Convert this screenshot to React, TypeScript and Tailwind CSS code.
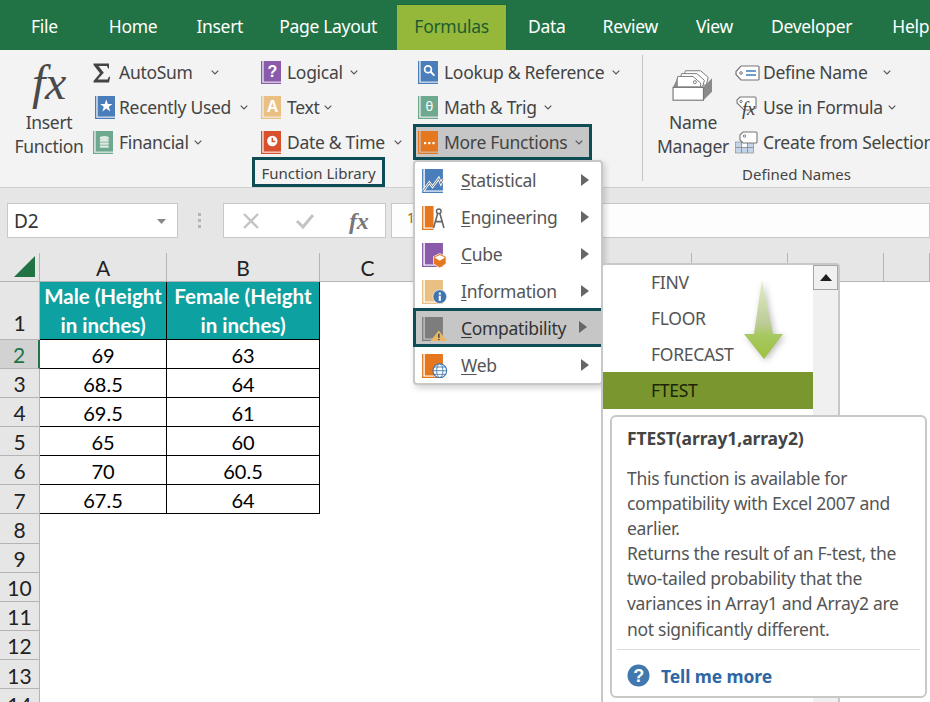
import React from "react";

const ui = { fontFamily: '"Noto Sans", "Open Sans", sans-serif' };
const cell = { fontFamily: 'Lato, "Open Sans", sans-serif' };

function Book({ color, w = 20, h = 23, children }: { color: string; w?: number; h?: number; children?: React.ReactNode }) {
  return (
    <svg width={w} height={h} viewBox="0 0 20 23" className="shrink-0 overflow-visible">
      <rect x="0" y="0" width="1.3" height="23" fill={color} />
      <rect x="2.6" y="0" width="17.4" height="20.6" fill={color} />
      <rect x="0" y="21.7" width="20" height="1.3" fill={color} />
      {children}
    </svg>
  );
}

function Chevron({ ml }: { ml: number }) {
  return (
    <svg width="8" height="5" viewBox="0 0 8 5" style={{ marginLeft: ml }} className="shrink-0">
      <path d="M0.7 0.7 L4 4 L7.3 0.7" fill="none" stroke="#555" strokeWidth="1.2" />
    </svg>
  );
}

function Row({ icon, label, ml, x = 26 }: { icon: React.ReactNode; label: string; ml: number; x?: number }) {
  return (
    <div className="h-[35px] flex items-center whitespace-nowrap">
      <div className="shrink-0 flex items-center" style={{ width: x }}>{icon}</div>
      <span>{label}</span>
      <Chevron ml={ml} />
    </div>
  );
}

const Sigma = (
  <svg width="18" height="20" viewBox="0 0 18 20">
    <path d="M0.5 0.5 H16 V5.5 H15 L14 3 H5.5 L10.8 9.8 L4.6 16.6 H14.5 L16 13.8 H17.2 L16 19.5 H0.5 V18 L7 10.3 L0.5 2 Z" fill="#444" />
  </svg>
);
const RecentIcon = (
  <div className="ml-[2px] flex">
    <Book color="#4a7ebb">
      <path d="M11.3 3.5 L12.9 8 L17.5 8 L13.8 10.8 L15.2 15.4 L11.3 12.6 L7.4 15.4 L8.8 10.8 L5.1 8 L9.7 8 Z" fill="#fff" />
    </Book>
  </div>
);
const FinIcon = (
  <Book color="#6ea98f">
    <ellipse cx="11.3" cy="7" rx="4.6" ry="2" fill="#dfe9e3" />
    <rect x="6.7" y="8.4" width="9.2" height="2.4" rx="1" fill="#dfe9e3" />
    <rect x="6.7" y="11.4" width="9.2" height="2.4" rx="1" fill="#dfe9e3" />
    <rect x="6.7" y="14.4" width="9.2" height="2.4" rx="1" fill="#dfe9e3" />
  </Book>
);
const LogicalIcon = (
  <Book color="#8a5aab">
    <text x="11.3" y="16" textAnchor="middle" fontSize="16" fontWeight="700" fill="#fff" fontFamily="Liberation Sans, sans-serif">?</text>
  </Book>
);
const TextIcon = (
  <Book color="#e9bf82">
    <text x="11.3" y="16" textAnchor="middle" fontSize="16" fontWeight="700" fill="#fff" fontFamily="Liberation Sans, sans-serif">A</text>
  </Book>
);
const DateIcon = (
  <Book color="#d9512c">
    <circle cx="11.3" cy="10" r="5.2" fill="#fff" />
    <path d="M11.3 6.8 V10.4 H14.4" fill="none" stroke="#d9512c" strokeWidth="1.5" />
  </Book>
);
const LookupIcon = (
  <Book color="#4a7ebb">
    <circle cx="10" cy="8.2" r="3.4" fill="none" stroke="#fff" strokeWidth="1.7" />
    <path d="M12.6 10.8 L16.4 14.6" stroke="#fff" strokeWidth="2" />
  </Book>
);
const MathIcon = (
  <Book color="#6ea98f">
    <text x="11.3" y="15" textAnchor="middle" fontSize="13" fill="#fff" fontFamily="Noto Sans, sans-serif">θ</text>
  </Book>
);
const MoreIcon = (
  <Book color="#e5771e">
    <rect x="6" y="11" width="2.2" height="2.2" fill="#fff" />
    <rect x="10.2" y="11" width="2.2" height="2.2" fill="#fff" />
    <rect x="14.4" y="11" width="2.2" height="2.2" fill="#fff" />
  </Book>
);

const NameMgr = (
  <svg width="42" height="38" viewBox="0 0 44 40">
    <path d="M14 5 H30 L38 12 L36 20 H10 Z" fill="#fff" stroke="#777" strokeWidth="1" />
    <path d="M10 8 H26 L34 15 L32 22 H6 Z" fill="#fff" stroke="#777" strokeWidth="1" />
    <path d="M6 11 H22 L30 18 V22 H3 Z" fill="#fff" stroke="#777" strokeWidth="1" />
    <circle cx="24" cy="17" r="1.6" fill="none" stroke="#777" />
    <path d="M1 22 L6 12 V22 Z" fill="#8a8a8a" />
    <path d="M33 22 L42 13 V27 L33 36 Z" fill="#8a8a8a" />
    <rect x="1" y="22.5" width="32" height="13.5" fill="#fff" stroke="#777" strokeWidth="1.2" />
  </svg>
);
const DefineIcon = (
  <svg width="25" height="18" viewBox="0 0 25 18">
    <path d="M6 2 H23 Q24 2 24 3 V15 Q24 16 23 16 H6 L1 10.5 V7.5 Z" fill="#fff" stroke="#777" strokeWidth="1.2" />
    <circle cx="6" cy="9" r="1.3" fill="none" stroke="#777" />
    <path d="M11 7 H21 M11 11 H21" stroke="#3f7cc0" strokeWidth="1.3" />
  </svg>
);
const UseIcon = (
  <svg width="25" height="24" viewBox="0 0 25 24" className="overflow-visible">
    <path d="M5 1 H20 Q21 1 21 2 V12 L17 14 H9 L2 7 V4 Z" fill="#fff" stroke="#777" strokeWidth="1.1" />
    <circle cx="6" cy="5.5" r="1.2" fill="none" stroke="#777" />
    <text x="7" y="19" fontSize="19" fontStyle="italic" fill="#444" fontFamily="Liberation Serif, serif">fx</text>
  </svg>
);
const CreateIcon = (
  <svg width="23" height="23" viewBox="0 0 23 23">
    <rect x="0.5" y="11" width="18" height="11" fill="#c4d5eb" stroke="#999" strokeWidth="0.8" />
    <path d="M6.5 11 V22 M12.5 11 V22 M0.5 16.5 H18.5" stroke="#8a8a8a" strokeWidth="0.9" />
    <rect x="6.5" y="11" width="6" height="5.5" fill="#fff" stroke="#8a8a8a" strokeWidth="0.8" />
    <path d="M8 1 H21 Q22 1 22 2 V11 Q22 12 21 12 H8 L5 9 V4 Z" fill="#fff" stroke="#777" strokeWidth="1.1" />
    <circle cx="9.5" cy="5" r="1.2" fill="none" stroke="#777" />
  </svg>
);

function Tab({ label, ml }: { label: string; ml: number }) {
  return <span style={{ marginLeft: ml }} className="shrink-0">{label}</span>;
}

function GroupLabel({ children }: { children: React.ReactNode }) {
  return <span className="text-[15px] tracking-normal text-[#444]">{children}</span>;
}

function Menu() {
  const items: [string, string, React.ReactNode][] = [
    ["S", "tatistical", (
      <Book color="#4a7ebb" w={21} h={24}>
        <path d="M1 21 L7 13 L10 17 L16 9 L18 14 L20 10" fill="none" stroke="#fff" strokeWidth="2.4" />
        <path d="M1 21 L7 13 L10 17 L16 9 L18 14 L20 10" fill="none" stroke="#666" strokeWidth="0.9" />
      </Book>
    )],
    ["E", "ngineering", (
      <Book color="#e5771e" w={21} h={24}>
        <rect x="11" y="0" width="9" height="23" fill="#fff" />
        <circle cx="16" cy="5" r="2.2" fill="none" stroke="#666" strokeWidth="1.4" />
        <path d="M15 7 L11 21 M17 7 L21 21 M12 15 H20" fill="none" stroke="#666" strokeWidth="1.5" />
      </Book>
    )],
    ["C", "ube", (
      <Book color="#8a5aab" w={21} h={24}>
        <path d="M17 10 L23 13 V20 L17 24 L11 20 V13 Z" fill="#e5771e" stroke="#fff" strokeWidth="0.7" />
        <path d="M12 14 L17 17 L22 14 L17 11.5 Z" fill="#fff" />
      </Book>
    )],
    ["I", "nformation", (
      <Book color="#e9bf82" w={21} h={24}>
        <circle cx="17" cy="16" r="6.6" fill="#3f74ae" stroke="#fff" strokeWidth="0.6" />
        <rect x="16" y="15" width="2" height="5" fill="#fff" />
        <rect x="16" y="12" width="2" height="2" fill="#fff" />
      </Book>
    )],
    ["C", "ompatibility", (
      <Book color="#7d7d7d" w={21} h={24}>
        <path d="M16 13 L24 23 H8 Z" fill="#eab765" />
        <rect x="15.4" y="16" width="1.4" height="4" fill="#444" />
        <rect x="15.4" y="21" width="1.4" height="1.2" fill="#444" />
      </Book>
    )],
    ["W", "eb", (
      <Book color="#e5771e" w={21} h={24}>
        <circle cx="17" cy="16" r="6.6" fill="#fff" stroke="#3f74ae" strokeWidth="1" />
        <ellipse cx="17" cy="16" rx="3" ry="6.6" fill="none" stroke="#3f74ae" strokeWidth="0.8" />
        <path d="M10.4 16 H23.6 M11.4 12.5 H22.6 M11.4 19.5 H22.6" stroke="#3f74ae" strokeWidth="0.8" />
      </Book>
    )],
  ];
  return (
    <div className="absolute left-[413px] top-[160px] w-[190px] h-[225px] bg-white border-2 border-[#c8c8c8] rounded-[4px] shadow-[2px_3px_6px_rgba(0,0,0,0.18)]">
      {items.map(([first, rest, icon], i) => {
        const active = i === 4;
        return (
          <div
            key={i}
            className={active
              ? "relative -mx-[2px] -mt-[2px] w-[191px] h-[39px] pt-[2px] flex items-center border-[3px] border-[#0e4d55] bg-[#c6c6c6] text-[#333]"
              : "relative h-[37px] flex items-center text-[#555]"}
          >
            <div className={active ? "ml-[6px] w-[39px] flex" : "ml-[7px] w-[39px] flex"}>{icon}</div>
            <span><span className="underline underline-offset-2">{first}</span>{rest}</span>
            <svg width="8" height="12" viewBox="0 0 8 12" className={active ? "absolute left-[163px] top-[10px]" : "absolute left-[166px] top-[12px]"}>
              <path d="M0 0 L8 6 L0 12 Z" fill="#666" />
            </svg>
          </div>
        );
      })}
    </div>
  );
}

function SubMenu() {
  return (
    <div className="absolute left-[601px] top-[263px] w-[239px] h-[439px] bg-white border-2 border-b-0 border-[#c8c8c8] rounded-t-[4px] flex">
      <div className="w-[210px] text-[#555] shrink-0">
        <div className="h-[35px] pl-[48px] flex items-center">FINV</div>
        <div className="h-[36px] pl-[48px] flex items-center">FLOOR</div>
        <div className="h-[36px] pl-[48px] flex items-center">FORECAST</div>
        <div className="h-[37px] pl-[48px] flex items-center bg-[#7a962e] text-[#1b2408]">FTEST</div>
      </div>
      <div className="flex-1 bg-[#f0f0f0]">
        <div className="h-[25px] w-[25px] border border-[#a6a6a6] bg-[#f0f0f0] flex items-center justify-center">
          <svg width="12" height="7" viewBox="0 0 12 7"><path d="M0 7 L6 0 L12 7 Z" fill="#1f1f1f" /></svg>
        </div>
      </div>
      <svg width="50" height="90" viewBox="0 0 50 90" className="absolute left-[136px] top-[14px] overflow-visible drop-shadow-[2px_2px_3px_rgba(0,0,0,0.25)]">
        <defs>
          <linearGradient id="arrowGrad" x1="0" y1="0" x2="0" y2="1">
            <stop offset="0" stopColor="#e4efc8" />
            <stop offset="0.55" stopColor="#bccb98" />
            <stop offset="0.7" stopColor="#a8c860" />
            <stop offset="1" stopColor="#9cc143" />
          </linearGradient>
        </defs>
        <path d="M23 1 L34 55 L44 55 L25 80 L5 55 L15 55 Z" fill="url(#arrowGrad)" />
      </svg>
    </div>
  );
}

function Tooltip() {
  return (
    <div className="absolute left-[610px] top-[415px] w-[317px] h-[283px] bg-white border-2 border-[#c8c8c8] rounded-[6px] px-[15px] pt-[9px] text-[#555]">
      <div className="font-bold tracking-[-0.1px] leading-[24px] text-[#444]">FTEST(array1,array2)</div>
      <div className="mt-[16px] leading-[25.1px] whitespace-nowrap">
        <div>This function is available for</div>
        <div>compatibility with Excel 2007 and</div>
        <div>earlier.</div>
        <div>Returns the result of an F-test, the</div>
        <div>two-tailed probability that the</div>
        <div>variances in Array1 and Array2 are</div>
        <div>not significantly different.</div>
      </div>
      <div className="-mx-[10px] mt-[7px] border-t border-[#dcdcdc] pt-[13px] pl-[10px] flex items-center">
        <svg width="23" height="23" viewBox="0 0 23 23" className="shrink-0">
          <circle cx="11.5" cy="11.5" r="11" fill="#4178ae" />
          <text x="11.5" y="18" textAnchor="middle" fontSize="18" fontWeight="700" fill="#fff" fontFamily="Liberation Sans, sans-serif">?</text>
        </svg>
        <span className="ml-[11px] font-bold tracking-[-0.1px] text-[#2f66a3]">Tell me more</span>
      </div>
    </div>
  );
}

const Hdr = "bg-[#e6e6e6] border-r border-b border-[#b4b4b4] flex items-center justify-center pt-[2px] text-[21px] tracking-normal text-[#222]";
const HdrEnd = "bg-[#e6e6e6] border-r border-b border-[#b4b4b4] flex items-end justify-center text-[21px] tracking-normal text-[#222]";
const Td = "border-r border-b border-black flex items-center justify-center pt-[2px] text-[20px] tracking-normal text-black";
const TealTd = "bg-[#0ea1a1] border-r border-b border-black text-white font-bold text-[20.5px] tracking-normal leading-[29px] text-center flex flex-col justify-center pt-[2px] whitespace-nowrap";

function Sheet() {
  const rows: [string, string][] = [["69", "63"], ["68.5", "64"], ["69.5", "61"], ["65", "60"], ["70", "60.5"], ["67.5", "64"]];
  return (
    <div style={cell} className="grid grid-cols-[40px_127px_153px_96px_180px_96px_96px_96px_46px] grid-rows-[29px_57.5px_repeat(13,29.17px)] overflow-hidden h-[449px]">
      <div className="bg-[#e6e6e6] border-r border-b border-[#b4b4b4] relative">
        <svg width="22" height="22" viewBox="0 0 22 22" className="absolute left-[14px] top-[3px]"><path d="M21 0 V21 H0 Z" fill="#217346" /></svg>
      </div>
      {["A", "B", "C", "", "", "", "", ""].map((c, i) => (
        <div key={i} className={Hdr}>{c}</div>
      ))}
      <div className={HdrEnd}>1</div>
      <div className={TealTd}><div>Male (Height</div><div>in inches)</div></div>
      <div className={TealTd}><div>Female (Height</div><div>in inches)</div></div>
      <div className="col-span-6" />
      {rows.map(([a, b], i) => (
        <React.Fragment key={i}>
          <div className={i === 0
            ? "bg-[#d2d2d2] border-r-2 border-b border-r-[#217346] border-b-[#b4b4b4] flex items-center justify-center pt-[2px] text-[21px] tracking-normal text-[#217346]"
            : Hdr}>{i + 2}</div>
          <div className={Td}>{a}</div>
          <div className={Td}>{b}</div>
          <div className="col-span-6" />
        </React.Fragment>
      ))}
      {[8, 9, 10, 11, 12, 13, 14].map((n) => (
        <React.Fragment key={n}>
          <div className={Hdr}>{n}</div>
          <div className="col-span-8" />
        </React.Fragment>
      ))}
    </div>
  );
}

export default function App() {
  return (
    <div style={ui} className="relative w-[930px] h-[702px] overflow-hidden bg-white text-[17.5px] tracking-[-0.3px] text-[#444]">
      <div className="h-[50px] bg-[#217346] flex items-end text-white whitespace-nowrap">
        <div className="flex items-center h-[50px] pt-[2px]">
          <Tab label="File" ml={31} />
          <Tab label="Home" ml={51} />
          <Tab label="Insert" ml={39} />
          <Tab label="Page Layout" ml={36} />
        </div>
        <div className="ml-[20px] h-[46px] w-[110px] bg-[#96b83a] border-r border-t border-[#1d6a3e] text-[#1d5c30] flex items-center justify-center pb-[2px] shrink-0">Formulas</div>
        <div className="flex items-center h-[50px] pt-[2px]">
          <Tab label="Data" ml={21} />
          <Tab label="Review" ml={37} />
          <Tab label="View" ml={38} />
          <Tab label="Developer" ml={38} />
          <Tab label="Help" ml={40} />
        </div>
      </div>

      <div className="h-[138px] bg-[#f3f3f3] border-b border-[#d0d0d0] flex">
        <div className="w-[642px] shrink-0 flex flex-col">
          <div className="flex pt-[5px] h-[110px]">
            <div className="w-[93px] shrink-0 pl-[14px]">
              <div className="w-[70px] flex flex-col items-center leading-[24px]">
                <div className="h-[55px] flex items-center justify-center text-[48px] italic text-[#4a4a4a] leading-none" style={{ fontFamily: '"Liberation Serif", serif' }}>fx</div>
                <div>Insert</div>
                <div>Function</div>
              </div>
            </div>
            <div className="w-[168px] shrink-0">
              <Row icon={Sigma} label="AutoSum" ml={18} />
              <Row icon={RecentIcon} label="Recently Used" ml={9} />
              <Row icon={FinIcon} label="Financial" ml={5} />
            </div>
            <div className="w-[157px] shrink-0">
              <Row icon={LogicalIcon} label="Logical" ml={7} />
              <Row icon={TextIcon} label="Text" ml={5} />
              <Row icon={DateIcon} label="Date & Time" ml={9} />
            </div>
            <div className="flex-1">
              <Row icon={LookupIcon} label="Lookup & Reference" ml={8} />
              <Row icon={MathIcon} label="Math & Trig" ml={7} />
              <div className="h-[36px] -mt-[1px] w-[179px] -ml-[5px] pl-[2px] border-[3px] border-[#0e4d55] bg-[#c6c6c6] flex items-center whitespace-nowrap">
                <div className="w-[26px] shrink-0 flex items-center">{MoreIcon}</div>
                <span>More Functions</span>
                <Chevron ml={8} />
              </div>
            </div>
          </div>
          <div className="ml-[252px] -mt-[3px] w-[133px] h-[30px] border-[3px] border-[#0e4d55] flex items-center justify-center pt-[3px]">
            <GroupLabel>Function Library</GroupLabel>
          </div>
        </div>
        <div className="w-px mt-[5px] h-[126px] bg-[#c4c4c4] shrink-0" />
        <div className="flex-1 flex flex-col min-w-0">
          <div className="flex pt-[5px] h-[110px]">
            <div className="w-[92px] shrink-0 pl-[8px] flex flex-col items-center leading-[24px]">
              <div className="h-[55px] flex items-center justify-center pt-[5px]">{NameMgr}</div>
              <div>Name</div>
              <div>Manager</div>
            </div>
            <div className="flex-1 whitespace-nowrap">
              <Row icon={DefineIcon} label="Define Name" ml={16} x={28} />
              <Row icon={UseIcon} label="Use in Formula" ml={5} x={28} />
              <div className="h-[35px] flex items-center">
                <div className="w-[28px] shrink-0 flex">{CreateIcon}</div>
                <span>Create from Selection</span>
              </div>
            </div>
          </div>
          <div className="ml-[44px] w-[219px] h-[30px] flex items-center justify-center pt-[2px]">
            <GroupLabel>Defined Names</GroupLabel>
          </div>
        </div>
      </div>

      <div className="h-[65px] bg-[#e6e6e6] flex items-start pt-[15px]">
        <div className="ml-[7px] w-[171px] h-[35px] bg-white border border-[#c8c8c8] flex items-center justify-between pl-[6px] pt-[1px] pr-[11px] text-[19px] tracking-normal text-[#333] shrink-0">
          <span>D2</span>
          <svg width="9" height="5" viewBox="0 0 9 5"><path d="M0 0 H9 L4.5 5 Z" fill="#888" /></svg>
        </div>
        <div className="ml-[20px] w-[3px] h-[35px] flex flex-col items-center justify-center gap-[3px] shrink-0">
          <div className="w-[3px] h-[3px] bg-[#b5b5b5]" /><div className="w-[3px] h-[3px] bg-[#b5b5b5]" /><div className="w-[3px] h-[3px] bg-[#b5b5b5]" />
        </div>
        <div className="ml-[22px] w-[163px] h-[35px] bg-white border border-[#c8c8c8] flex items-center shrink-0">
          <svg width="18" height="18" viewBox="0 0 18 18" className="ml-[18px]"><path d="M2 2 L16 16 M16 2 L2 16" stroke="#c4c4c4" strokeWidth="2.4" /></svg>
          <svg width="20" height="18" viewBox="0 0 20 18" className="ml-[35px]"><path d="M2 9 L8 15 L18 3" fill="none" stroke="#c4c4c4" strokeWidth="3" /></svg>
          <span className="ml-[34px] text-[24px] italic font-bold text-[#777]" style={{ fontFamily: '"Liberation Serif", serif' }}>fx</span>
        </div>
        <div className="ml-[5px] flex-1 h-[35px] bg-[#fdfdfd] border border-[#c8c8c8] pl-[15px] text-[14px] text-[#9a6a20] leading-[28px]">1</div>
      </div>

      <Sheet />
      <Menu />
      <SubMenu />
      <Tooltip />
    </div>
  );
}
